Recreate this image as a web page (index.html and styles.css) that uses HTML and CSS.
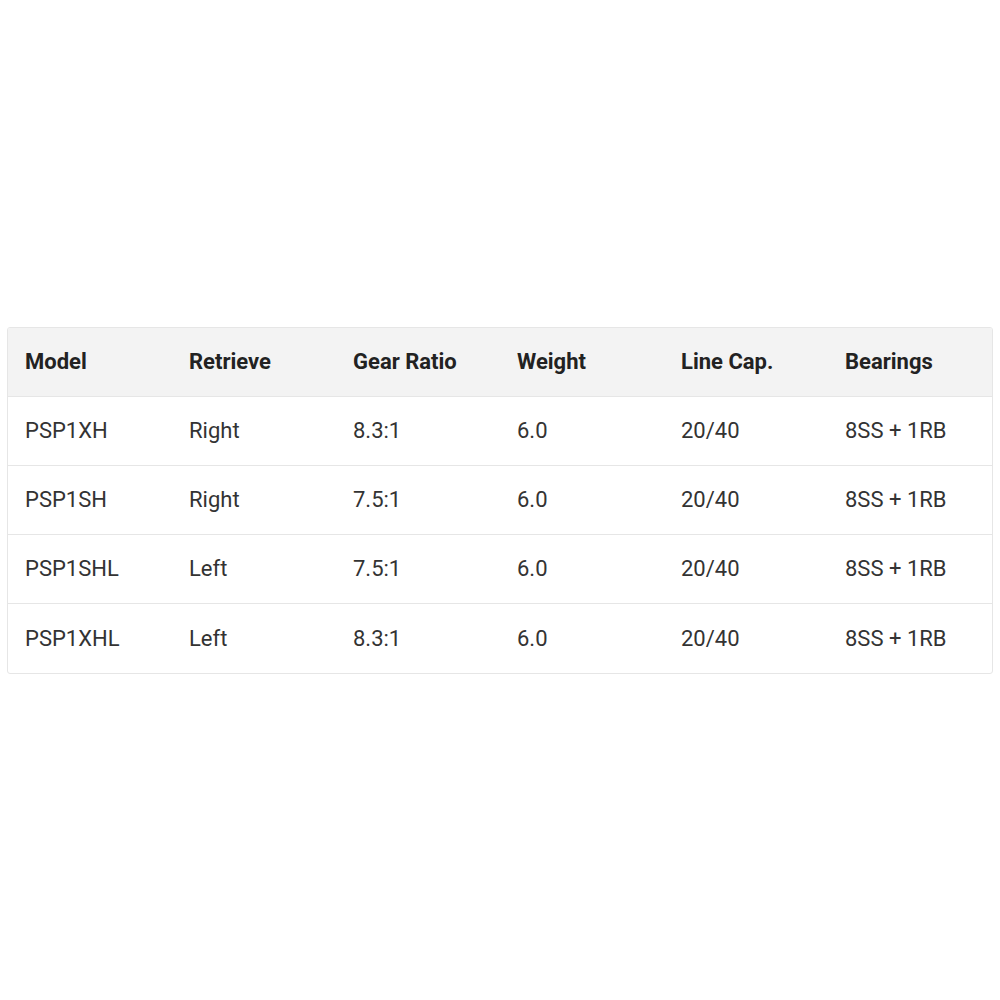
FILE: index.html
```html
<!DOCTYPE html>
<html>
<head>
<meta charset="utf-8">
<link rel="stylesheet" href="styles.css">
</head>
<body>
<div class="wrap">
<table class="specs">
<thead>
<tr><th>Model</th><th>Retrieve</th><th>Gear Ratio</th><th>Weight</th><th>Line Cap.</th><th>Bearings</th></tr>
</thead>
<tbody>
<tr><td>PSP1XH</td><td>Right</td><td>8.3:1</td><td>6.0</td><td>20/40</td><td>8SS + 1RB</td></tr>
<tr><td>PSP1SH</td><td>Right</td><td>7.5:1</td><td>6.0</td><td>20/40</td><td>8SS + 1RB</td></tr>
<tr><td>PSP1SHL</td><td>Left</td><td>7.5:1</td><td>6.0</td><td>20/40</td><td>8SS + 1RB</td></tr>
<tr><td>PSP1XHL</td><td>Left</td><td>8.3:1</td><td>6.0</td><td>20/40</td><td>8SS + 1RB</td></tr>
</tbody>
</table>
</div>
</body>
</html>
```
FILE: styles.css
```css
html, body {
  margin: 0;
  padding: 0;
  background: #ffffff;
}
body {
  font-family: Roboto, "Liberation Sans", sans-serif;
  width: 1000px;
  height: 1000px;
}
.wrap {
  padding: 327px 7px 0 7px;
}
.specs {
  width: 986px;
  table-layout: fixed;
  border-collapse: separate;
  border-spacing: 0;
  border: 1px solid #e6e6e6;
  border-radius: 3px;
  overflow: hidden;
}
.specs th, .specs td {
  height: 69px;
  padding: 0 0 0 17px;
  text-align: left;
  font-size: 22px;
  line-height: 26px;
  box-sizing: border-box;
}
.specs th {
  background: #f3f3f3;
  color: #222222;
  font-weight: 700;
  border-bottom: 1px solid #e6e6e6;
}
.specs td {
  color: #333333;
  font-weight: 400;
  border-bottom: 1px solid #e6e6e6;
}
.specs tbody tr:last-child td {
  border-bottom: none;
}
```
